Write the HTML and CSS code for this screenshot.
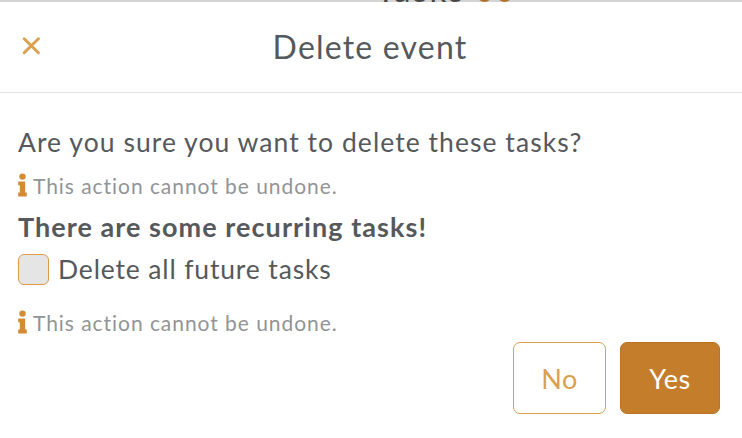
FILE: index.html
```html
<!DOCTYPE html>
<html lang="en">
<head>
    <meta charset="UTF-8">
    <meta name="viewport" content="width=device-width, initial-scale=1.0">
    <title>Delete event</title>
    <link rel="stylesheet" href="styles.css">
</head>
<body>
    <div class="page-behind">
        <span class="page-title">Tasks</span>
        <span class="dot"></span>
        <span class="dot"></span>
    </div>

    <div class="modal">
        <div class="modal-header">
            <button type="button" class="close" aria-label="Close">
                <svg width="18" height="18" viewBox="0 0 18 18">
                    <path d="M2.2 1.7 L16.4 15.7 M16.4 1.7 L2.2 15.7" />
                </svg>
            </button>
            <h1>Delete event</h1>
        </div>

        <div class="modal-body">
            <p class="question">Are you sure you want to delete these tasks?</p>
            <p class="hint">
                <svg class="info" width="10" height="24" viewBox="0 0 10 24">
                    <circle cx="4.5" cy="3.6" r="3.2" />
                    <path d="M.2 8.6H7.2V19.6H8.8V23.4H.2V19.6H1.8V12.2H.2Z" />
                </svg>
                <span>This action cannot be undone.</span>
            </p>
            <p class="recurring">There are some recurring tasks!</p>
            <label class="future">
                <input type="checkbox">
                <span>Delete all future tasks</span>
            </label>
            <p class="hint">
                <svg class="info" width="10" height="24" viewBox="0 0 10 24">
                    <circle cx="4.5" cy="3.6" r="3.2" />
                    <path d="M.2 8.6H7.2V19.6H8.8V23.4H.2V19.6H1.8V12.2H.2Z" />
                </svg>
                <span>This action cannot be undone.</span>
            </p>
        </div>

        <div class="modal-footer">
            <button type="button" class="btn btn-no">No</button>
            <button type="button" class="btn btn-yes">Yes</button>
        </div>
    </div>
</body>
</html>
```
FILE: styles.css
```css
* {
    box-sizing: border-box;
}

body {
    font-family: Lato, sans-serif;
    background-color: white;
    color: #55595c;
    margin: 0;
    height: 438px;
    overflow: hidden;
}

h1, p {
    margin: 0;
}

/* sliver of the page above the modal */
.page-behind {
    display: flex;
    align-items: flex-end;
    height: 2px;
    padding-left: 376px;
    overflow: hidden;
    background-color: #d4d4d4;
}

.page-title {
    width: 101px;
    font-size: 33px;
    line-height: 25px;
    letter-spacing: 2.4px;
    color: #484848;
}

.dot {
    flex: none;
    width: 15px;
    height: 15px;
    margin-right: 5px;
    border-radius: 50%;
    background-color: #b5722a;
}

.modal-header {
    display: grid;
    grid-template-columns: 64px 1fr 66px;
    align-items: center;
    height: 91px;
    border-bottom: 1px solid #e3e3e3;
}

.close {
    display: flex;
    width: 18px;
    height: 18px;
    margin: 0 0 3px 22px;
    padding: 0;
    border: none;
    background: none;
}

.close path {
    fill: none;
    stroke: #d9a050;
    stroke-width: 2.9;
    stroke-linecap: round;
}

h1 {
    font-size: 32px;
    font-weight: normal;
    line-height: 90px;
    letter-spacing: 1.2px;
    text-align: center;
}

.modal-body {
    padding: 29px 18px 0;
    font-size: 26.5px;
}

.question {
    line-height: 40px;
    letter-spacing: 1.05px;
}

.hint {
    display: flex;
    align-items: center;
    gap: 5px;
    height: 46px;
    font-size: 21px;
    letter-spacing: 0.95px;
    color: #929496;
}

.info {
    fill: #d38b35;
}

.recurring {
    height: 40px;
    font-size: 27px;
    font-weight: bold;
    line-height: 38px;
    letter-spacing: 1.05px;
}

.future {
    display: flex;
    align-items: center;
    gap: 9px;
    height: 42px;
    margin-bottom: 9px;
    letter-spacing: 0.85px;
}

.future input {
    appearance: none;
    width: 31px;
    height: 31px;
    margin: 0;
    border: 1px solid #df9b46;
    border-radius: 6px;
    background-color: #e5e5e5;
}

.modal-footer {
    display: flex;
    justify-content: flex-end;
    gap: 14px;
    margin-top: -3px;
    padding-right: 22px;
}

.btn {
    height: 72px;
    padding: 0;
    border-radius: 7px;
    font-family: inherit;
    font-size: 27px;
    letter-spacing: 0.5px;
}

.btn-no {
    width: 93px;
    border: 1px solid #d9a050;
    background-color: white;
    color: #d9a050;
}

.btn-yes {
    width: 100px;
    border: 1px solid #b87327;
    background-color: #c47d2b;
    color: white;
}
```
